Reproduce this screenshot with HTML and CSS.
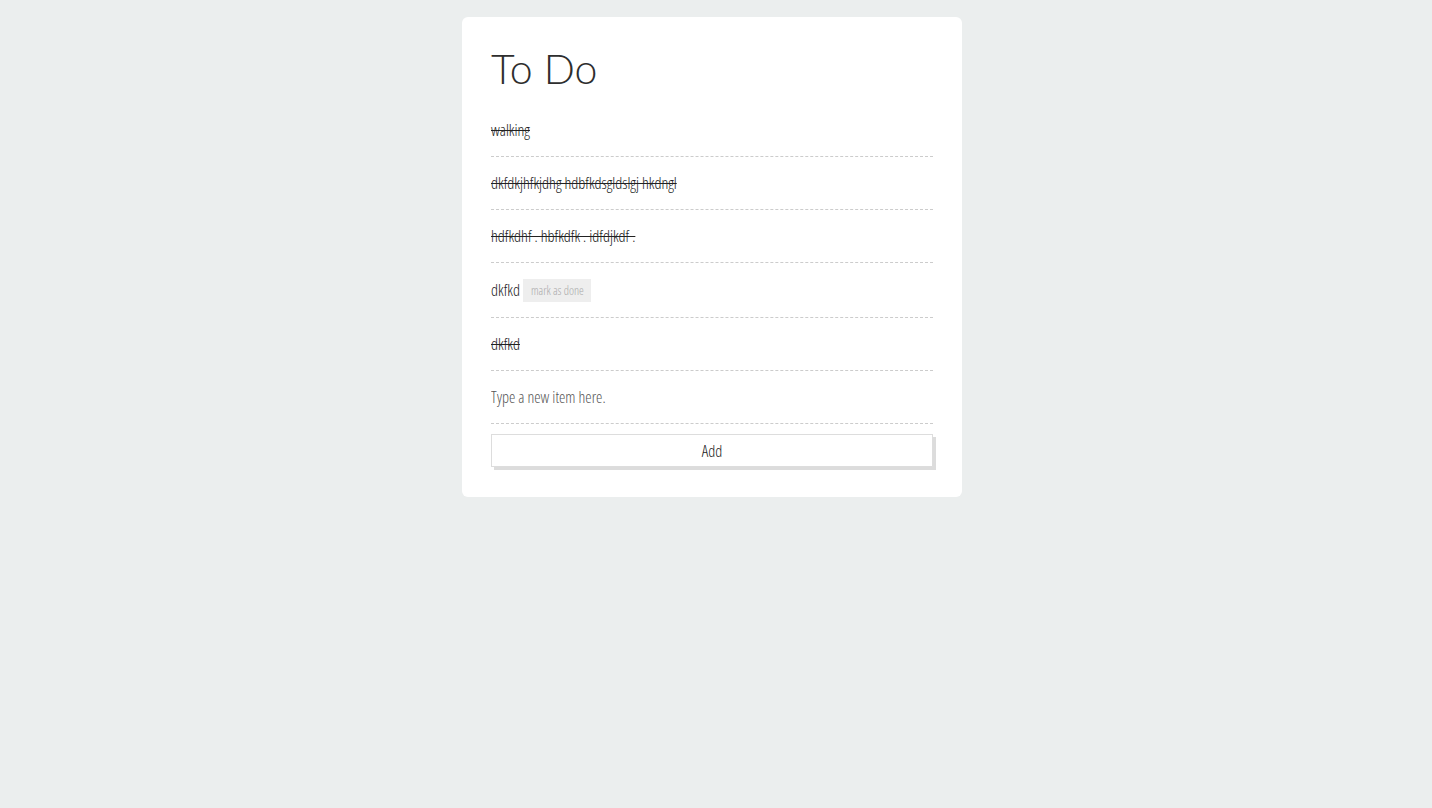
FILE: index.html
```html
<!DOCTYPE html>
<html>
<head>
<meta charset="utf-8">
<link rel="stylesheet" href="styles.css">
</head>
<body>
<div class="card">
  <h1 class="title">To Do</h1>
  <ul class="list">
    <li class="item done">walking</li>
    <li class="item done">dkfdkjhfkjdhg hdbfkdsgldslgj hkdngl</li>
    <li class="item done">hdfkdhf . hbfkdfk . idfdjkdf .</li>
    <li class="item"><span>dkfkd</span><button class="mark">mark as done</button></li>
    <li class="item done">dkfkd</li>
    <li class="item input-row"><input class="new" type="text" placeholder="Type a new item here."></li>
  </ul>
  <button class="add">Add</button>
</div>
</body>
</html>
```
FILE: styles.css
```css
html, body {
  margin: 0;
  padding: 0;
  background: #ebeeee;
}
body {
  padding: 17px 8px 0 0;
  font-family: "Open Sans", "Liberation Sans", sans-serif;
  font-stretch: 75%;
  color: #333;
}
.card {
  width: 442px;
  margin: 0 auto;
  background: #fff;
  border-radius: 6px;
  padding: 23px 29px 30px;
}
.title {
  margin: 0 0 6px;
  font-family: "Lato", sans-serif;
  font-weight: 300;
  font-size: 41px;
  line-height: 58px;
  color: #2e2e2e;
}
.list {
  list-style: none;
  margin: 0;
  padding: 0;
}
.item {
  display: flex;
  align-items: center;
  gap: 3px;
  padding: 16px 0 15px;
  line-height: 21px;
  font-size: 16px;
  font-weight: 300;
  border-bottom: 1px dashed #ccc;
  color: #222;
}
.done {
  text-decoration: line-through;
}
.mark {
  border: none;
  background: #eeeeee;
  color: #aaa;
  font-family: inherit;
  font-stretch: 75%;
  font-weight: 300;
  font-size: 12px;
  height: 23px;
  padding: 0 7px 0 8px;
}
.new {
  border: none;
  outline: none;
  width: 100%;
  padding: 0;
  font-family: inherit;
  font-stretch: 75%;
  font-weight: 300;
  font-size: 16px;
  line-height: 21px;
  color: #333;
}
.new::placeholder {
  color: #555;
}
.add {
  display: block;
  width: 442px;
  height: 33px;
  margin-top: 10px;
  background: #fff;
  border: 1px solid #ddd;
  box-shadow: 3px 3px 0 #dcdcdc;
  font-family: inherit;
  font-stretch: 75%;
  font-weight: 300;
  font-size: 16px;
  color: #222;
}
```
